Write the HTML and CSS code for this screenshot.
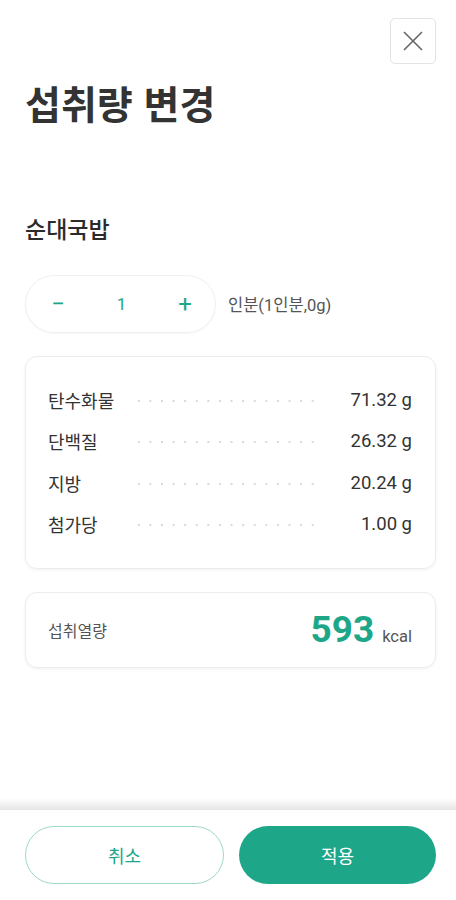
FILE: index.html
```html
<!DOCTYPE html>
<html lang="ko">
<head>
<meta charset="utf-8">
<link rel="stylesheet" href="styles.css">
</head>
<body>
<div class="page">
  <div class="top">
    <button class="close" aria-label="닫기">
      <svg width="22" height="22" viewBox="0 0 22 22"><path d="M2 2 L20 20 M20 2 L2 20" stroke="#666" stroke-width="1.6" fill="none"/></svg>
    </button>
  </div>
  <h1 class="title">섭취량 변경</h1>
  <h2 class="food">순대국밥</h2>
  <div class="amount">
    <div class="stepper">
      <span class="step">−</span>
      <span class="qty">1</span>
      <span class="step">+</span>
    </div>
    <span class="unit">인분(1인분,0g)</span>
  </div>
  <div class="card nutrients">
    <div class="row"><span class="name">탄수화물</span><span class="dots"></span><span class="val">71.32 g</span></div>
    <div class="row"><span class="name">단백질</span><span class="dots"></span><span class="val">26.32 g</span></div>
    <div class="row"><span class="name">지방</span><span class="dots"></span><span class="val">20.24 g</span></div>
    <div class="row"><span class="name">첨가당</span><span class="dots"></span><span class="val">1.00 g</span></div>
  </div>
  <div class="card kcal">
    <span class="klabel">섭취열량</span>
    <span class="kval"><b>593</b><span class="unitk">kcal</span></span>
  </div>
  <div class="spacer"></div>
  <div class="footer">
    <button class="btn cancel">취소</button>
    <button class="btn apply">적용</button>
  </div>
</div>
</body>
</html>
```
FILE: styles.css
```css
* { box-sizing: border-box; }
html, body { margin: 0; padding: 0; background: #fff; }
body { font-family: Roboto, "Noto Sans CJK KR", sans-serif; color: #333; }
.page { min-height: 900px; display: flex; flex-direction: column; padding: 0 20px 0 25px; }
.top { display: flex; justify-content: flex-end; padding-top: 18px; }
.close { width: 46px; height: 46px; border: 1px solid #e3e3e3; border-radius: 5px; background: #fff; display: flex; align-items: center; justify-content: center; padding: 0; }
.title { margin: 13px 0 0; font-size: 39px; font-weight: 700; line-height: 50px; color: #333; font-family: "Noto Sans CJK KR", sans-serif; }
.food { margin: 85px 0 0; font-size: 23px; font-weight: 500; line-height: 32px; color: #2b2b2b; font-family: "Noto Sans CJK KR", sans-serif; }
.amount { display: flex; align-items: center; margin-top: 31px; gap: 12px; }
.stepper { width: 191px; height: 58px; border: 1px solid #f0f0f0; border-radius: 29px; display: flex; align-items: center; justify-content: space-between; padding: 0 22px 0 24px; color: #1ea689; box-shadow: 0 1px 2px rgba(0,0,0,0.04); }
.step { font-size: 24px; width: 16px; text-align: center; }
.qty { font-size: 17px; }
.unit { font-size: 16.5px; color: #555; }
.card { border: 1px solid #ececec; border-radius: 12px; box-shadow: 0 1px 3px rgba(0,0,0,0.06); }
.nutrients { margin-top: 23px; padding: 31px 23px 32px 22px; display: flex; flex-direction: column; gap: 17.3px; }
.row { display: flex; align-items: center; height: 24px; font-size: 18px; color: #333; }
.name { width: 85px; }
.dots { flex: 1; height: 2px; margin: 2px 25px 0 0; background-image: radial-gradient(circle, #d9d9d9 0.8px, transparent 1px); background-size: 11.6px 2px; background-repeat: repeat-x; }
.val { width: 64px; text-align: right; font-size: 18.5px; white-space: nowrap; }
.kcal { margin-top: 23px; height: 76px; display: flex; align-items: center; justify-content: space-between; padding: 0 23px 0 22px; }
.klabel { font-size: 16px; color: #555; }
.kval { display: flex; align-items: baseline; }
.kval b { font-size: 37px; font-weight: 700; color: #1ea689; margin-right: 8px; }
.unitk { font-size: 16.5px; color: #555; }
.spacer { flex: 1; }
.footer { position: relative; margin: 0 -20px 0 -25px; padding: 16px 20px 16px 25px; display: flex; gap: 15px; }
.footer::before { content: ""; position: absolute; left: 0; right: 0; top: -12px; height: 12px; background: linear-gradient(to bottom, rgba(0,0,0,0), rgba(0,0,0,0.1)); }
.btn { flex: 1; height: 58px; border-radius: 29px; font-size: 18px; font-family: "Noto Sans CJK KR", sans-serif; }
.cancel { background: #fff; border: 1px solid #9ed8ca; color: #1ea689; }
.apply { background: #1ea689; border: none; color: #fff; }
```
